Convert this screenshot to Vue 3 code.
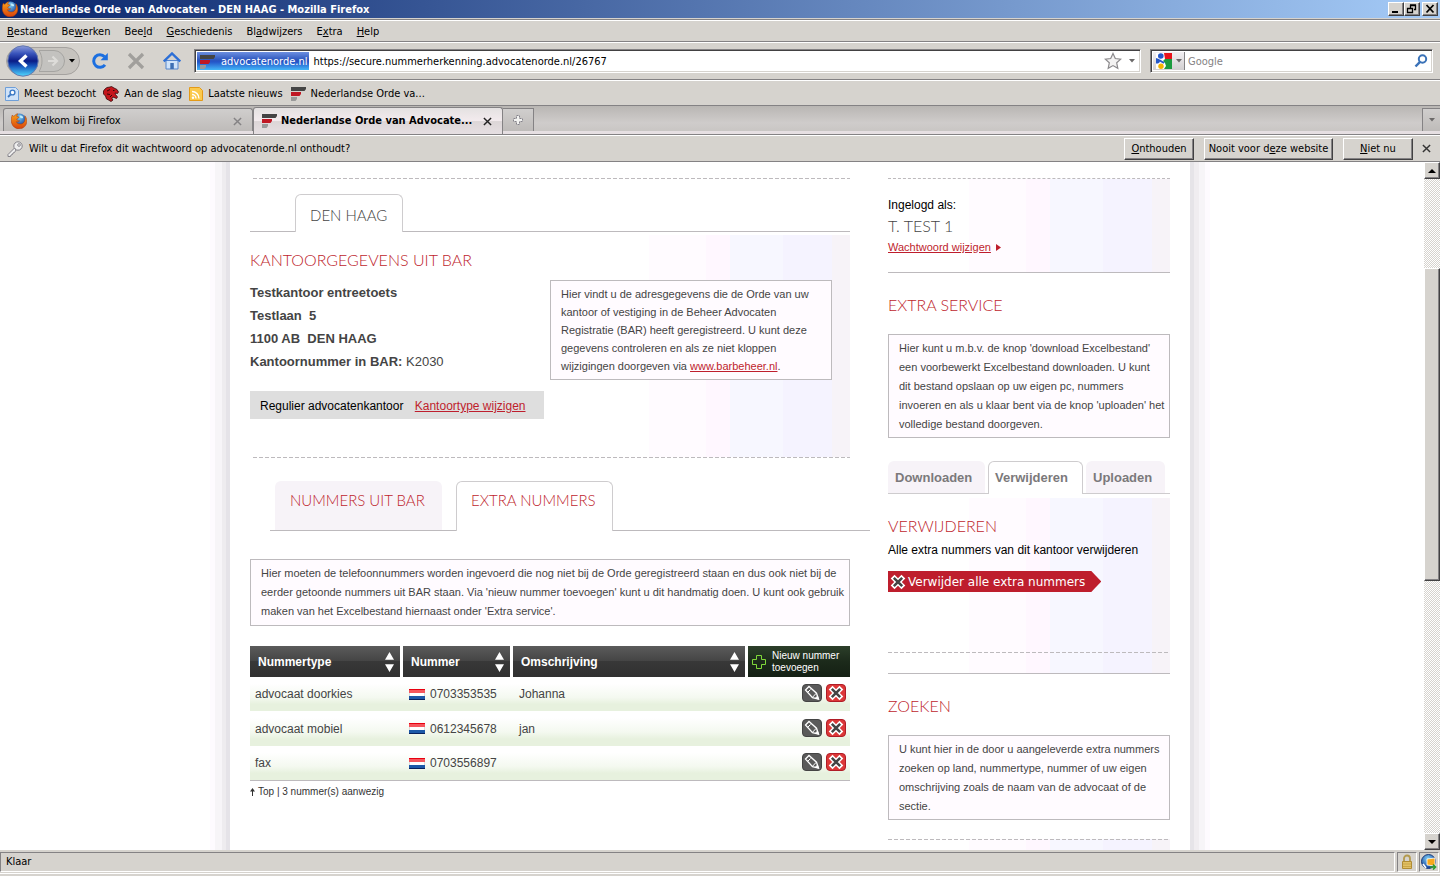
<script setup>
import { ref } from 'vue'

const menus = [
  ['', 'B', 'estand'],
  ['Be', 'w', 'erken'],
  ['Bee', 'l', 'd'],
  ['', 'G', 'eschiedenis'],
  ['Bl', 'a', 'dwijzers'],
  ['E', 'x', 'tra'],
  ['', 'H', 'elp'],
]
const url = ref('https://secure.nummerherkenning.advocatenorde.nl/26767')
const query = ref('')
const columns = ['Nummertype', 'Nummer', 'Omschrijving']
const rows = [
  { type: 'advocaat doorkies', number: '0703353535', note: 'Johanna' },
  { type: 'advocaat mobiel', number: '0612345678', note: 'jan' },
  { type: 'fax', number: '0703556897', note: '' },
]
</script>

<template>
  <div class="window">
    <svg class="defs" aria-hidden="true">
      <defs>
        <radialGradient id="globe" cx="0.45" cy="0.3" r="0.7">
          <stop offset="0" stop-color="#7fd0f7" />
          <stop offset="1" stop-color="#123a94" />
        </radialGradient>
        <linearGradient id="fox" x1="0" y1="0" x2="0" y2="1">
          <stop offset="0" stop-color="#f9a51b" />
          <stop offset="1" stop-color="#d9420b" />
        </linearGradient>
        <linearGradient id="back" x1="0" y1="0" x2="0" y2="1">
          <stop offset="0" stop-color="#8d9ddc" />
          <stop offset="0.25" stop-color="#3a55bc" />
          <stop offset="0.5" stop-color="#0a1c86" />
          <stop offset="0.65" stop-color="#1550b8" />
          <stop offset="1" stop-color="#4fd8ff" />
        </linearGradient>
        <symbol id="i-firefox" viewBox="0 0 16 16">
          <circle cx="8.500" cy="7" r="6.500" fill="url(#globe)" />
          <path d="M8.500 2.500c2.500-.5 4 1 3.500 2.500-.8.8-2.300.2-3-.7z" fill="#bdecfb" />
          <path d="M1.300 2C.2 4.600-.1 7.500.6 10c1 3.600 4 5.800 7.600 5.800 4.300 0 7.500-3.200 7.600-7.500 0-2.300-.7-4.200-2-5.500.6 2.300.4 4.300-.4 5.700-1 2-3 2.800-4.700 2.500-1.800-.2-3-1.200-3.400-2.300 1.300.5 2.600.1 3.400-.9-1.500.1-2.500-.5-3-1.600.7-.9 2-1 2.500-1.900-.7-.8-1.800-.8-2.500-1 .1-1 .5-1.900 1.200-2.600-1.300.1-2.200.7-2.900 1.600C2.800 3.600 1.900 3.500 1.300 2z" fill="url(#fox)" stroke="#a8360a" stroke-width=".5" />
        </symbol>
        <symbol id="i-orde" viewBox="0 0 16 14">
          <path d="M1 0h15v2l-1.500 2H1z" fill="#444" />
          <path d="M1 5h10v2L9.500 9H1z" fill="#c01824" />
          <path d="M1 10h6v2l-1.500 2H1z" fill="#999" />
        </symbol>
        <symbol id="i-cross" viewBox="0 0 16 16">
          <path d="M2.600 2.600l10.800 10.800M13.400 2.600L2.600 13.400" stroke="#fff" stroke-width="5.400" />
          <path d="M3.800 3.800l8.400 8.400M12.200 3.800l-8.400 8.400" stroke="#444" stroke-width="2.500" />
        </symbol>
        <symbol id="i-x" viewBox="0 0 10 10">
          <path d="M1 1l8 8M9 1L1 9" stroke="currentColor" stroke-width="1.600" />
        </symbol>
      </defs>
    </svg>

    <header class="titlebar">
      <svg class="ic16"><use href="#i-firefox" /></svg>
      <h1>Nederlandse Orde van Advocaten - DEN HAAG - Mozilla Firefox</h1>
      <div class="winbtns">
        <button aria-label="Minimaliseren"><svg viewBox="0 0 12 10"><path d="M2 8h6" stroke="#000" stroke-width="2" /></svg></button>
        <button aria-label="Verkleinen"><svg viewBox="0 0 12 10"><path d="M4.500 4V1.500h5v4H8M4 1h6M1.500 4.500h5v4h-5zM1 4.500h6" fill="none" stroke="#000" stroke-width="1.300" /></svg></button>
        <button class="close" aria-label="Sluiten"><svg viewBox="0 0 12 10"><path d="M2.500 1l7 7.500M9.500 1l-7 7.500" stroke="#000" stroke-width="1.800" /></svg></button>
      </div>
    </header>

    <nav class="menubar">
      <button v-for="m in menus" :key="m.join('')">{{ m[0] }}<u>{{ m[1] }}</u>{{ m[2] }}</button>
    </nav>

    <div class="toolbar">
      <div class="history">
        <button class="back" aria-label="Vorige">
          <svg viewBox="0 0 32 32">
            <circle cx="16" cy="16" r="15.200" fill="url(#back)" stroke="#6478ae" stroke-width="1" />
            <path d="M19.500 10.500L13.500 16l6 5.500" fill="none" stroke="#fff" stroke-width="3.400" />
          </svg>
        </button>
        <button class="forward" aria-label="Volgende">
          <svg viewBox="0 0 26 22">
            <path d="M0 .5h15a10.500 10.500 0 0 1 0 21H0c4-6 4-15 0-21z" fill="#c3c2bf" stroke="#a5a4a1" />
            <path d="M9 11h8M13.500 6.500l4.500 4.500-4.500 4.500" fill="none" stroke="#dddcd9" stroke-width="2.200" />
          </svg>
        </button>
        <button class="recent" aria-label="Recente pagina's"><svg viewBox="0 0 6 4"><path d="M0 0h6L3 3.500z" /></svg></button>
      </div>
      <button class="tool" aria-label="Vernieuwen">
        <svg viewBox="0 0 18 18"><path d="M14 12.800A6.300 6.300 0 1 1 13.600 4.700" fill="none" stroke="#1c6fe0" stroke-width="3" /><path d="M16.800 1v7.300H9.500z" fill="#1c6fe0" /></svg>
      </button>
      <button class="tool" aria-label="Stoppen">
        <svg viewBox="0 0 18 18"><path d="M2 2l14 14M16 2L2 16" stroke="#a19f9c" stroke-width="3.200" /></svg>
      </button>
      <button class="tool" aria-label="Startpagina">
        <svg viewBox="0 0 18 18"><path d="M3 8.500h12V17H3z" fill="#cfe3fa" stroke="#5585cc" /><path d="M.8 9.500L9 1.500l8.200 8" fill="none" stroke="#2d6fd6" stroke-width="2.400" /><path d="M7.300 11h3.500v6H7.300z" fill="#3d6fb4" /></svg>
      </button>
      <div class="urlbar">
        <button class="identity"><svg class="orde"><use href="#i-orde" /></svg>advocatenorde.nl</button>
        <input v-model="url" aria-label="Adres" />
        <button class="star" aria-label="Bladwijzer maken"><svg viewBox="0 0 18 18"><path d="M9 1.500l2.300 5 5.400.6-4 3.700 1.100 5.500L9 13.600l-4.800 2.700 1.100-5.500-4-3.700 5.400-.6z" fill="#f3f2f2" stroke="#8b898c" stroke-width="1.200" /></svg></button>
        <button class="drop" aria-label="Adressen"><svg viewBox="0 0 6 4"><path d="M0 0h6L3 3.500z" /></svg></button>
      </div>
      <div class="search">
        <button class="engine" aria-label="Zoekmachine">
          <svg class="g" viewBox="0 0 16 16">
            <path d="M0 0h16v16H0z" fill="#fff" />
            <path d="M8 0h8v6H9z" fill="#e8131c" />
            <path d="M9 6h7v10H8l2-3-1-3-2-2z" fill="#1b9a3e" />
            <path d="M0 5l3 1 1 3-2 1.500H0z" fill="#2457c9" />
            <circle cx="4.800" cy="3" r="2.800" fill="#2457c9" />
            <path d="M3 7l5 3" stroke="#2457c9" stroke-width="2" />
            <circle cx="5" cy="13.200" r="2.700" fill="#f4b400" />
          </svg>
          <svg class="tri" viewBox="0 0 6 4"><path d="M0 0h6L3 3.500z" /></svg>
        </button>
        <input v-model="query" placeholder="Google" aria-label="Zoeken" />
        <button class="go" aria-label="Zoek"><svg viewBox="0 0 14 14"><circle cx="8.500" cy="5" r="3.700" fill="#fff" stroke="#3a72b8" stroke-width="2" /><path d="M6 7.800L1.500 12.500" stroke="#3a72b8" stroke-width="2.400" /></svg></button>
      </div>
    </div>

    <div class="bookmarks">
      <button><svg class="ic14" viewBox="0 0 14 14"><path d="M.5.5h10l3 3v10H.5z" fill="#cfe2f8" stroke="#6f9fd8" /><circle cx="7.500" cy="5.500" r="2.400" fill="#fff" stroke="#3b78c4" stroke-width="1.400" /><path d="M5.700 7.300L3 10" stroke="#3b78c4" stroke-width="1.800" /></svg>Meest bezocht</button>
      <a href="#"><svg class="ic16" viewBox="0 0 16 16"><path d="M.5 5L2 3l2-1.500 3-.5 1.500-.5L11 2l3 1.500L15.500 6l-1 1.500-2.500-.5 .5 1.500L14.500 11l-1 1.500L10 11l-1 1.500 1 1.500-2 1.500L5.500 14l-2-1-1-3L.5 8z" fill="#c4161c" stroke="#33080a" stroke-width=".8" /><path d="M4 5l3-1.500M4 8l3 .5M7 11l2-2M10 4.500h1.500" stroke="#33080a" /></svg>Aan de slag</a>
      <button><svg class="ic14" viewBox="0 0 14 14"><path d="M.5.5h10l3 3v10H.5z" fill="#fbc94c" stroke="#e39a18" /><path d="M3 4.500a7 7 0 0 1 7 7M3 7.500a4 4 0 0 1 4 4" fill="none" stroke="#fff" stroke-width="1.400" /><circle cx="4" cy="10.800" r="1.200" fill="#fff" /></svg>Laatste nieuws</button>
      <a href="#"><svg class="orde"><use href="#i-orde" /></svg>Nederlandse Orde va...</a>
    </div>

    <div class="tabstrip">
      <div class="tab">
        <svg class="ic16"><use href="#i-firefox" /></svg><span>Welkom bij Firefox</span>
        <button aria-label="Tabblad sluiten"><svg class="x"><use href="#i-x" /></svg></button>
      </div>
      <div class="tab active">
        <svg class="orde"><use href="#i-orde" /></svg><span>Nederlandse Orde van Advocate...</span>
        <button aria-label="Tabblad sluiten"><svg class="x"><use href="#i-x" /></svg></button>
      </div>
      <button class="newtab" aria-label="Nieuw tabblad"><svg viewBox="0 0 10 10"><path d="M3.500.5h3v3h3v3h-3v3h-3v-3h-3v-3h3z" fill="#f2f2f0" stroke="#84828a" stroke-dasharray="2 1" /></svg></button>
      <button class="alltabs" aria-label="Alle tabbladen"><svg viewBox="0 0 6 4"><path d="M0 0h6L3 3.500z" /></svg></button>
    </div>

    <div class="notice">
      <svg class="ic16" viewBox="0 0 16 16"><circle cx="11" cy="5" r="4.200" fill="#eee" stroke="#85838a" /><circle cx="12" cy="4" r="1.300" fill="#fff" stroke="#85838a" /><path d="M7.500 7L1 13.500V15.500h2.500l.5-1.500 1.500-.5.5-1.500 1.500-.5L9 9z" fill="#eee" stroke="#85838a" /></svg>
      <p>Wilt u dat Firefox dit wachtwoord op advocatenorde.nl onthoudt?</p>
      <button class="push"><u>O</u>nthouden</button>
      <button class="push wide">Nooit voor d<u>e</u>ze website</button>
      <button class="push"><u>N</u>iet nu</button>
      <button class="dismiss" aria-label="Melding sluiten"><svg class="x"><use href="#i-x" /></svg></button>
    </div>

    <div class="viewport">
      <div class="canvas">
        <div class="page">
          <main>
            <div class="dash inset"></div>
            <div class="placetabs"><a href="#" class="caps small">DEN HAAG</a></div>
            <section class="office stripes">
              <div class="address">
                <h2 class="caps">KANTOORGEGEVENS UIT BAR</h2>
                <p><b>Testkantoor entreetoets</b></p>
                <p><b>Testlaan&nbsp; 5</b></p>
                <p><b>1100 AB&nbsp; DEN HAAG</b></p>
                <p><b>Kantoornummer in BAR:</b> K2030</p>
                <div class="kind">Regulier advocatenkantoor <a href="#">Kantoortype wijzigen</a></div>
              </div>
              <div class="box">
                Hier vindt u de adresgegevens die de Orde van uw<br />
                kantoor of vestiging in de Beheer Advocaten<br />
                Registratie (BAR) heeft geregistreerd. U kunt deze<br />
                gegevens controleren en als ze niet kloppen<br />
                wijzigingen doorgeven via <a href="#">www.barbeheer.nl</a>.
              </div>
            </section>
            <div class="dash inset"></div>
            <div class="numtabs">
              <a href="#" class="caps small">NUMMERS UIT BAR</a>
              <a href="#" class="caps small on">EXTRA NUMMERS</a>
            </div>
            <div class="box loose">
              Hier moeten de telefoonnummers worden ingevoerd die nog niet bij de Orde geregistreerd staan en dus ook niet bij de<br />
              eerder getoonde nummers uit BAR staan. Via 'nieuw nummer toevoegen' kunt u dit handmatig doen. U kunt ook gebruik<br />
              maken van het Excelbestand hiernaast onder 'Extra service'.
            </div>
            <table>
              <thead>
                <tr>
                  <th v-for="c in columns" :key="c" scope="col">
                    <div class="head">
                      {{ c }}
                      <button :aria-label="'Sorteer op ' + c"><svg viewBox="0 0 10 22"><path d="M5 0l5 8.500H0zM5 22l5-8.500H0z" fill="#fff" /></svg></button>
                    </div>
                  </th>
                  <th scope="col" class="new">
                    <button><svg viewBox="0 0 14 14"><path d="M4.500.5h5v4h4v5h-4v4h-5v-4h-4v-5h4z" fill="none" stroke="#7fd83a" /></svg><span>Nieuw nummer<br />toevoegen</span></button>
                  </th>
                </tr>
              </thead>
              <tbody>
                <tr v-for="r in rows" :key="r.number">
                  <td>{{ r.type }}</td>
                  <td>
                    <div class="num">
                      <svg viewBox="0 0 16 11" role="img" aria-label="Nederland"><path d="M0 0h16v11H0z" fill="#fff" /><path d="M0 0h16v4H0z" fill="#f5565c" /><path d="M0 7h16v4H0z" fill="#1c58a8" /><path d="M0 .5h16" stroke="#e80010" /><path d="M0 10.500h16" stroke="#07215e" /><path d="M.5 4v3M15.500 4v3" stroke="#ddd" /></svg>
                      {{ r.number }}
                    </div>
                  </td>
                  <td>{{ r.note }}</td>
                  <td>
                    <div class="acts">
                      <button class="edit" :aria-label="'Wijzig ' + r.number"><svg viewBox="0 0 16 16"><path d="M1.500 5L5 1.500l7.500 6.700 2 6-6-1.500z" fill="none" stroke="#fff" stroke-width="1.300" /><path d="M4 7l2.500-2.500M8.500 12.300l3.700-4M11.500 13l3 1.200-1-3z" fill="#fff" stroke="#fff" /></svg></button>
                      <button class="del" :aria-label="'Verwijder ' + r.number"><svg><use href="#i-cross" /></svg></button>
                    </div>
                  </td>
                </tr>
              </tbody>
            </table>
            <p class="count"><svg viewBox="0 0 5 8"><path d="M2.500 0L5 3.500H0zM2 3h1v5H2z" fill="#333" /></svg><a href="#">Top</a> | 3 nummer(s) aanwezig</p>
          </main>

          <aside>
            <section class="login stripes">
              <p>Ingelogd als:</p>
              <strong class="caps">T. TEST 1</strong>
              <a href="#">Wachtwoord wijzigen</a><svg viewBox="0 0 5 7"><path d="M0 0l5 3.500L0 7z" fill="#be1e2d" /></svg>
            </section>
            <h2 class="caps">EXTRA SERVICE</h2>
            <div class="box loose">
              Hier kunt u m.b.v. de knop 'download Excelbestand'<br />
              een voorbewerkt Excelbestand downloaden. U kunt<br />
              dit bestand opslaan op uw eigen pc, nummers<br />
              invoeren en als u klaar bent via de knop 'uploaden' het<br />
              volledige bestand doorgeven.
            </div>
            <div class="filetabs">
              <a href="#">Downloaden</a>
              <a href="#" class="on">Verwijderen</a>
              <a href="#">Uploaden</a>
            </div>
            <section class="remove stripes">
              <h2 class="caps">VERWIJDEREN</h2>
              <p>Alle extra nummers van dit kantoor verwijderen</p>
              <button class="arrow"><svg><use href="#i-cross" /></svg>Verwijder alle extra nummers</button>
              <div class="dash"></div>
            </section>
            <h2 class="caps">ZOEKEN</h2>
            <div class="box loose">
              U kunt hier in de door u aangeleverde extra nummers<br />
              zoeken op land, nummertype, nummer of uw eigen<br />
              omschrijving zoals de naam van de advocaat of de<br />
              sectie.
            </div>
            <div class="find stripes"><div class="dash"></div></div>
          </aside>
        </div>
      </div>
      <div class="scrollbar">
        <button aria-label="Omhoog"><svg viewBox="0 0 8 4"><path d="M4 0l4 4H0z" /></svg></button>
        <div class="before"></div>
        <div class="thumb"></div>
        <div class="after"></div>
        <button aria-label="Omlaag"><svg viewBox="0 0 8 4"><path d="M0 0h8L4 4z" /></svg></button>
      </div>
    </div>

    <footer class="status">
      <span class="msg">Klaar</span>
      <span class="cell"><svg viewBox="0 0 16 16"><path d="M5 8V4.500a3 3 0 0 1 6 0V8" fill="none" stroke="#b39a4e" stroke-width="1.800" /><path d="M3.500 7.500h9v7h-9z" fill="#e2c165" stroke="#b08c35" /><path d="M4 10h8M4 12.500h8" stroke="#c9a548" /></svg></span>
      <span class="cell"><svg viewBox="0 0 16 16"><circle cx="7.500" cy="7.500" r="7" fill="url(#globe)" stroke="#1a3b7c" /><path d="M6 5l8-1v8l-8-1z" fill="#f7a81b" stroke="#fff" stroke-width=".8" /><path d="M2 10l3 4" stroke="#fff" stroke-width="1.500" /><path d="M9 13h5M12 10.500l2.500 2.500-2.500 2.500" fill="none" stroke="#2e9b2e" stroke-width="1.600" /></svg></span>
    </footer>
  </div>
</template>

<style>
html,
body,
#app {
  height: 100%;
}
body {
  overflow: hidden;
}
</style>

<style scoped>
* {
  box-sizing: border-box;
}
button {
  font: inherit;
  color: inherit;
  background: none;
  border: 0;
  padding: 0;
  display: inline-flex;
  align-items: center;
  justify-content: center;
  white-space: nowrap;
}
p,
h1,
h2 {
  margin: 0;
  font: inherit;
}
svg {
  flex: none;
  display: block;
}
input {
  font: inherit;
  color: #000;
  border: 0;
  outline: 0;
  padding: 2px 0 0;
  background: none;
  flex: 1;
  min-width: 0;
}
.defs {
  width: 0;
  height: 0;
  position: absolute;
}
.ic16 {
  width: 16px;
  height: 16px;
}
.ic14 {
  width: 14px;
  height: 14px;
}
.orde {
  width: 16px;
  height: 14px;
}
.x {
  width: 9px;
  height: 9px;
}
.window {
  height: 100%;
  display: flex;
  flex-direction: column;
  background: #d6d3ce;
  color: #000;
  font: 11px/14px Tahoma, "DejaVu Sans Condensed", sans-serif;
}
.titlebar {
  height: 19px;
  flex: none;
  display: flex;
  align-items: center;
  gap: 2px;
  padding: 0 2px;
  background: linear-gradient(90deg, #08246b, #a5cbf7);
  color: #fff;
  border-bottom: 1px solid #d6d3ce;
}
.titlebar h1 {
  flex: 1;
  padding-top: 1px;
  font-weight: bold;
}
.winbtns {
  display: flex;
  color: #000;
}
.winbtns button,
.scrollbar button,
.thumb {
  background: #d6d3ce;
  border: 1px solid;
  border-color: #fff #424142 #424142 #fff;
  box-shadow: inset -1px -1px #848284;
}
.winbtns button {
  width: 16px;
  height: 14px;
}
.winbtns svg {
  width: 12px;
  height: 10px;
}
.winbtns .close {
  margin-left: 2px;
}
.menubar {
  height: 23px;
  flex: none;
  display: flex;
  align-items: center;
  gap: 14px;
  padding: 2px 7px 0;
  border-top: 1px solid #848284;
  border-bottom: 1px solid #848284;
  box-shadow: inset 0 1px #fff;
}
.toolbar {
  height: 38px;
  flex: none;
  display: flex;
  align-items: center;
  padding: 0 7px 0 6px;
  border-top: 1px solid #fff;
  border-bottom: 1px solid #848284;
}
.history {
  display: flex;
  align-items: center;
  height: 28px;
  width: 74px;
  margin-right: 11px;
  border: 1px solid #a5a29f;
  border-radius: 14px;
  background: #c6c3be;
}
.back svg {
  width: 32px;
  height: 32px;
}
.forward svg {
  width: 26px;
  height: 22px;
}
.recent {
  flex: 1;
}
.recent svg,
.drop svg,
.tri,
.alltabs svg {
  width: 6px;
  height: 4px;
}
.drop svg,
.tri,
.alltabs svg {
  fill: #6b6969;
}
.tool {
  width: 18px;
  margin-right: 18px;
}
.tool svg {
  width: 18px;
  height: 18px;
}
.tool + .urlbar {
  margin-left: -5px;
}
.urlbar,
.search {
  height: 24px;
  display: flex;
  align-items: stretch;
  background: #fff;
  border: 1px solid;
  border-color: #848284 #fff #fff #848284;
  box-shadow: inset 1px 1px #424142, inset -1px -1px #d6d3ce;
  padding: 2px;
}
.urlbar {
  flex: 1;
  margin-right: 9px;
}
.search {
  width: 283px;
}
.identity {
  color: #fff;
  gap: 6px;
  padding: 2px 2px 0;
  margin-right: 4px;
  background: linear-gradient(#6c8fe0, #2b55bd 45%, #2455c9 55%, #43b6f8);
}
.star svg {
  width: 18px;
  height: 18px;
}
.drop {
  width: 16px;
  padding-left: 4px;
}
.engine {
  width: 32px;
  gap: 4px;
  border-right: 1px solid #848284;
  margin-right: 3px;
  background: linear-gradient(#f2eff2, #d2cfd0);
}
.engine .g {
  width: 16px;
  height: 16px;
}
.search input::placeholder {
  color: #848284;
  opacity: 1;
}
.go svg {
  width: 14px;
  height: 14px;
  margin: 0 2px;
}
.bookmarks {
  height: 26px;
  flex: none;
  display: flex;
  align-items: center;
  gap: 7px;
  padding: 2px 5px 0;
  border-top: 1px solid #fff;
  border-bottom: 1px solid #848284;
}
.bookmarks a,
.bookmarks button {
  display: flex;
  align-items: center;
  gap: 5px;
  color: #000;
  text-decoration: none;
}
.tabstrip {
  height: 29px;
  flex: none;
  display: flex;
  align-items: flex-end;
  padding-left: 3px;
  border-bottom: 1px solid #848284;
  background: linear-gradient(#b9b6b3, #cfcccb 60%, #c9c6c4 88%, #848284 88%, #848284 90%, #e6dfe2 91%);
}
.tab {
  width: 250px;
  height: 23px;
  margin-bottom: 3px;
  display: flex;
  align-items: center;
  gap: 4px;
  padding: 2px 10px 0 7px;
  border: 1px solid #848284;
  border-bottom: 0;
  border-radius: 3px 3px 0 0;
  background: linear-gradient(#d0cecd, #bebbb9);
}
.tab span {
  flex: 1;
}
.tab .x {
  color: #848284;
}
.tab.active {
  height: 27px;
  margin-bottom: 0;
  font-weight: bold;
  padding-bottom: 2px;
  background: linear-gradient(#e4e1e1, #f3ebee 50%, #dcd6d7 52%, #e6dfe2);
}
.tab.active .x {
  color: #222;
}
.newtab,
.alltabs {
  height: 23px;
  margin-bottom: 3px;
  border: 1px solid #848284;
  border-bottom: 0;
  background: linear-gradient(#d0cecd, #bebbb9);
}
.newtab {
  width: 31px;
  border-left: 0;
}
.newtab svg {
  width: 10px;
  height: 10px;
}
.alltabs {
  width: 18px;
  margin-left: auto;
  border-right: 0;
}
.notice {
  height: 27px;
  flex: none;
  display: flex;
  align-items: center;
  padding: 0 9px 0 7px;
  border-top: 1px solid #fff;
  border-bottom: 1px solid #848284;
}
.notice p {
  flex: 1;
  padding-left: 6px;
}
.push {
  height: 22px;
  width: 70px;
  margin-right: 10px;
  border: 1px solid;
  border-color: #fff #424142 #424142 #fff;
  box-shadow: inset -1px -1px #848284;
}
.push.wide {
  width: 129px;
}
.push:nth-of-type(3) {
  margin-right: 9px;
}
.dismiss {
  color: #333;
}
.viewport {
  flex: 1;
  min-height: 0;
  display: flex;
  background: #fff;
}
.canvas {
  flex: 1;
  overflow: hidden;
  padding-right: 4px;
}
.page {
  width: 1000px;
  min-height: 100%;
  margin: 0 auto;
  padding: 16px 40px 0;
  display: flex;
  gap: 38px;
  font-family: Arial, "Liberation Sans", sans-serif;
  background: linear-gradient(90deg, #fefbff 0 5px, #f7f5f8 5px 12px, #eeecef 12px 16px, #e5e3e8 16px 20px, transparent 20px 980px, #e6e4e8 980px 984px, #f0edf0 984px 989px, #f7f5f8 989px 995px, #fefbff 995px);
}
main {
  flex: 1;
  min-width: 0;
}
aside {
  width: 282px;
}
.dash {
  height: 1px;
  background: repeating-linear-gradient(90deg, #bdbabd 0 4px, transparent 4px 6px);
}
.dash.inset {
  margin-left: 3px;
}
.caps {
  font: 300 16px/20px Lato, sans-serif;
}
.caps.small {
  font-size: 15px;
}
h2.caps {
  color: #be1e2d;
}
.stripes {
  background: linear-gradient(90deg, #fffbff 0 57px, #fff7ff 57px 81px, #f7f7ff 81px 134px, #f5f3ff 134px 183px, #f7f3f8 183px) right / 201px 100% no-repeat;
}
.placetabs {
  height: 53px;
  padding: 15px 0 0 45px;
  border-bottom: 1px solid #bdbabd;
}
.placetabs a {
  display: inline-block;
  height: 38px;
  min-width: 108px;
  padding: 10px 14px 0;
  border: 1px solid #ceccce;
  border-bottom: 0;
  border-radius: 6px 6px 0 0;
  background: #fff;
  color: #444;
  text-decoration: none;
}
.office {
  margin-top: 3px;
  height: 222px;
  padding-top: 15px;
  display: flex;
  gap: 6px;
  align-items: flex-start;
}
.address {
  width: 294px;
  color: #444;
  font-size: 13px;
  line-height: 23px;
}
.address h2 {
  margin-bottom: 11px;
}
.kind {
  margin-top: 18px;
  height: 28px;
  padding-left: 10px;
  background: #dedede;
  color: #000;
  font-size: 12px;
  line-height: 30px;
}
a {
  color: #be1e2d;
}
.kind a {
  margin-left: 8px;
}
.box {
  padding: 4px 10px;
  border: 1px solid #bdbabd;
  background: #fffbff;
  color: #444;
  font-size: 11px;
  line-height: 18px;
  white-space: nowrap;
}
.office .box {
  margin-top: 30px;
  width: 282px;
}
.box.loose {
  line-height: 19px;
}
.numtabs {
  display: flex;
  gap: 14px;
  margin: 23px -20px 28px 20px;
  padding-left: 5px;
  height: 50px;
  border-bottom: 1px solid #bdbabd;
}
.numtabs a {
  height: 49px;
  min-width: 167px;
  padding: 9px 15px 0;
  border-radius: 6px 6px 0 0;
  background: #f7f3f8;
  color: #be1e2d;
  text-decoration: none;
}
.numtabs .on,
.filetabs .on {
  border: 1px solid #ceccce;
  border-bottom: 0;
  background: #fff;
}
.numtabs .on {
  height: 50px;
  min-width: 157px;
  padding: 8px 14px 0;
}
table {
  width: 100%;
  margin-top: 20px;
  table-layout: fixed;
  border-spacing: 0;
  border-bottom: 1px solid #bdbabd;
  color: #444;
  font-size: 12px;
}
th {
  height: 31px;
  padding: 0;
  border-right: 3px solid #fff;
  background: linear-gradient(#5b5b5b, #454545 48%, #383838 50%, #303030) padding-box;
  color: #fff;
  text-align: left;
}
th:nth-child(1) {
  width: 153px;
}
th:nth-child(2) {
  width: 110px;
}
th.new {
  width: 102px;
  border: 0;
  background: linear-gradient(#2c3f2a, #1c2a1b 50%, #142014);
}
.head {
  display: flex;
  justify-content: space-between;
  align-items: center;
  padding: 0 6px 0 8px;
}
.head svg {
  width: 9px;
  height: 22px;
}
.new button {
  gap: 6px;
  padding-left: 4px;
  font-size: 10px;
  line-height: 12px;
  font-weight: normal;
  text-align: left;
}
.new svg {
  width: 14px;
  height: 14px;
}
tbody tr {
  background: linear-gradient(#fff 20%, #f4f9f0 60%, #e7f1de 80%);
}
td {
  height: 34px;
  padding: 0 6px 0 5px;
}
tr:nth-child(2) td {
  height: 35px;
}
td:nth-child(2),
td:nth-child(3) {
  padding-left: 6px;
}
td:nth-child(4) {
  padding: 0 4px 2px 0;
}
.num {
  display: flex;
  align-items: center;
  gap: 5px;
}
.num svg {
  width: 16px;
  height: 11px;
}
.acts {
  display: flex;
  justify-content: flex-end;
  gap: 4px;
}
.acts button {
  width: 20px;
  height: 18px;
  border-radius: 4px;
}
.acts svg {
  width: 16px;
  height: 16px;
}
.edit {
  background: #5a5a5a;
  border: 1px solid #444;
}
.del {
  background: #dc3838;
  border: 1px solid #b01c26;
}
.count {
  display: flex;
  align-items: center;
  margin-top: 4px;
  color: #333;
  font-size: 10px;
  white-space: pre;
}
.count svg {
  width: 5px;
  height: 8px;
  margin-right: 3px;
}
.count a {
  color: inherit;
  text-decoration: none;
}
.login {
  height: 95px;
  padding-top: 18px;
  border-top: 1px dashed #bdbabd;
  border-bottom: 1px solid #bdbabd;
  font-size: 11px;
}
.login p,
.remove p {
  font-size: 12px;
  line-height: 16px;
}
.login strong {
  display: block;
  margin: 3px 0 4px;
  color: #444;
}
.login svg {
  display: inline-block;
  width: 5px;
  height: 7px;
  margin-left: 5px;
}
aside > h2 {
  margin: 22px 0 19px;
}
aside > .box {
  padding: 4px 10px 3px;
}
.filetabs {
  display: flex;
  gap: 3px;
  height: 33px;
  margin: 23px 0 4px;
  border-bottom: 1px solid #ceccce;
}
.filetabs a {
  height: 32px;
  min-width: 79px;
  padding: 0 10px 0 7px;
  border-radius: 6px 6px 0 0;
  background: #f7f3f8;
  color: #7b797b;
  font-size: 13px;
  font-weight: bold;
  line-height: 33px;
  text-decoration: none;
}
.filetabs a:first-child {
  min-width: 97px;
}
.filetabs .on {
  height: 33px;
  min-width: 95px;
  padding: 0 9px 0 6px;
  line-height: 31px;
}
.remove {
  height: 176px;
  padding-top: 18px;
  border-bottom: 1px solid #bdbabd;
}
.remove p {
  margin: 6px 0 13px;
}
.arrow {
  height: 21px;
  gap: 2px;
  padding: 0 16px 0 2px;
  background: #be1e2d;
  color: #fff;
  font: 12px/20px Verdana, "DejaVu Sans", sans-serif;
  clip-path: polygon(0 0, calc(100% - 10px) 0, 100% 50%, calc(100% - 10px) 100%, 0 100%);
}
.arrow svg {
  width: 16px;
  height: 16px;
}
.remove .dash {
  margin-top: 59px;
}
.find {
  height: 60px;
  margin-top: 19px;
}
.scrollbar {
  width: 16px;
  display: flex;
  flex-direction: column;
  background: repeating-conic-gradient(#d6d3ce 0 25%, #fff 0 50%) 0 0 / 2px 2px;
}
.scrollbar button {
  height: 17px;
}
.scrollbar svg {
  width: 8px;
  height: 4px;
}
.before {
  flex: 89;
}
.thumb {
  flex: 312;
}
.after {
  flex: 253;
}
.status {
  height: 26px;
  flex: none;
  display: flex;
  gap: 2px;
  padding: 2px 1px 4px 0;
  box-shadow: inset 0 -2px #d6d3ce, inset 0 -3px #fff;
}
.msg,
.cell {
  display: flex;
  align-items: center;
  border: 1px solid;
  border-color: #848284 #fff #fff #848284;
}
.msg {
  flex: 1;
  padding-left: 5px;
}
.cell {
  width: 20px;
  justify-content: center;
}
.cell svg {
  width: 16px;
  height: 16px;
}
</style>
